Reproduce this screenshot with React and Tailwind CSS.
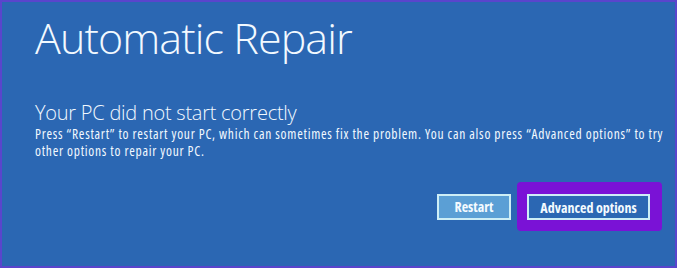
import React from "react";

const sans = '"Open Sans", "Noto Sans", sans-serif';

export default function App() {
  return (
    <div
      className="w-[677px] h-[268px] border-2 border-[#5a45cc] bg-[#2b67b3] text-[#f2f9ff] flex flex-col pl-[33px] pr-[13px]"
      style={{ fontFamily: sans }}
    >
      {/* heading */}
      <h1 className="text-[43px] leading-none font-light mt-[14px] tracking-[-0.9px]">
        Automatic Repair
      </h1>

      <div className="mt-[41px]">
        <h2 className="text-[20px] leading-[25px] font-light tracking-[-0.25px]">
          Your PC did not start correctly
        </h2>
        <p className="text-[13.5px] leading-[17px] mt-[1px] font-stretch-condensed tracking-[0.74px] whitespace-nowrap">
          Press “Restart” to restart your PC, which can sometimes fix the problem. You can also press “Advanced options” to try
          <br />
          other options to repair your PC.
        </p>
      </div>

      <div className="flex justify-end items-center gap-[6px] mt-[22px]">
        <button className="w-[74px] h-[26px] border-2 border-[#cdeef6] bg-[#5b9fd5] text-[14px] font-bold font-stretch-condensed text-[#f4fbff]">
          Restart
        </button>
        <div className="rounded-[4px] bg-[#7a12d6] pl-[10px] pr-[12px] pt-[12px] pb-[11px]">
          <button className="w-[123px] h-[26px] border-2 border-[#cdeef6] bg-[#2b67b3] text-[14px] font-bold font-stretch-condensed text-[#f4fbff]">
            Advanced options
          </button>
        </div>
      </div>
    </div>
  );
}
